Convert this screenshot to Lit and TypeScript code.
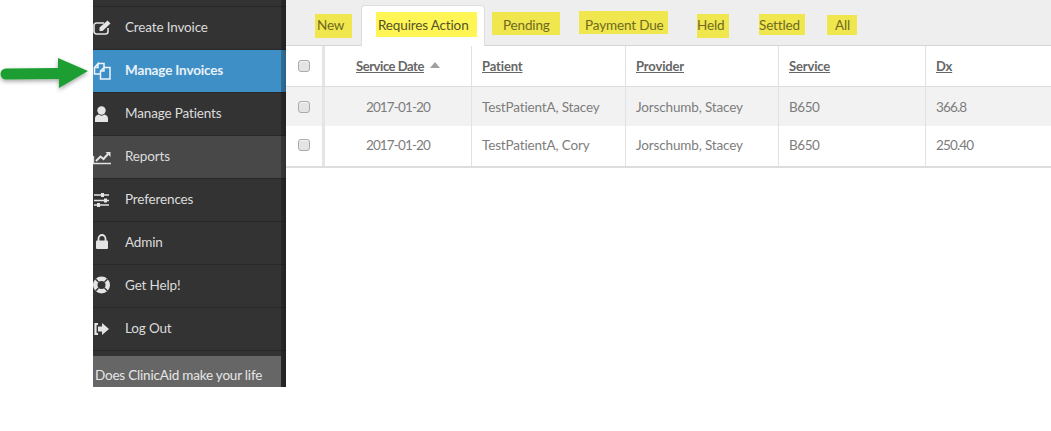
import { LitElement, html, css, svg } from "lit";
import { customElement } from "lit/decorators.js";

const ICONS: Record<string, unknown> = {
  edit: svg`<path d="M11 5H3.500A2.500 2.500 0 0 0 1 7.500V13.500A2.500 2.500 0 0 0 3.500 16H12.500A2.500 2.500 0 0 0 15 13.500V10" fill="none" stroke="currentColor" stroke-width="1.600"/><path d="M6.500 9.500L14.500 2.500L17.500 5.500L9.500 13H6.500Z" fill="currentColor"/>`,
  files: svg`<path d="M5 2.500H11V6M7 13H1.500V6.500L5 2.500V6.500H1.500" fill="none" stroke="currentColor" stroke-width="1.500"/><path d="M11 6.500H17V18H7.500V10L11 6.500V10H7.500" fill="none" stroke="currentColor" stroke-width="1.500"/>`,
  user: svg`<circle cx="8.500" cy="6.500" r="4.200" fill="currentColor"/><path d="M2 18V14.500C2 11.800 4 11 5.500 10.500C7 12 10 12 11.500 10.500C13 11 15 11.800 15 14.500V18Z" fill="currentColor"/>`,
  chart: svg`<path d="M0.500 9V16.500H18" fill="none" stroke="currentColor" stroke-width="1.300"/><path d="M3 14L7.500 9.500L10.500 12L15 7" fill="none" stroke="currentColor" stroke-width="2"/><path d="M12.500 5H17.500V10Z" fill="currentColor"/>`,
  sliders: svg`<path d="M1 5H16M1 10.500H16M1 15H16" stroke="currentColor" stroke-width="1.300"/><rect x="8" y="3" width="3" height="4" fill="currentColor"/><rect x="11" y="8.500" width="3" height="4" fill="currentColor"/><rect x="4" y="13" width="3" height="4" fill="currentColor"/>`,
  lock: svg`<path d="M5.500 8V5.500A3.500 3.500 0 0 1 12.500 5.500V8" fill="none" stroke="currentColor" stroke-width="1.800"/><rect x="3" y="7.500" width="12" height="8.500" rx="1" fill="currentColor"/>`,
  help: svg`<circle cx="8.500" cy="9" r="8.500" fill="currentColor"/><circle cx="8.500" cy="9" r="4" fill="#333"/><path d="M2.500 3L5.500 6M14.500 3L11.500 6M2.500 15L5.500 12M14.500 15L11.500 12" stroke="#333" stroke-width="1.300"/>`,
  logout: svg`<path d="M5 5H2.500V15H5" fill="none" stroke="currentColor" stroke-width="2.200"/><path d="M5 7.500H9V4L16 10L9 16V12.500H5Z" fill="currentColor"/>`,
};

const NAV = [
  { label: "Create Invoice", icon: "edit", cls: "" },
  { label: "Manage Invoices", icon: "files", cls: "active" },
  { label: "Manage Patients", icon: "user", cls: "" },
  { label: "Reports", icon: "chart", cls: "hover" },
  { label: "Preferences", icon: "sliders", cls: "" },
  { label: "Admin", icon: "lock", cls: "" },
  { label: "Get Help!", icon: "help", cls: "" },
  { label: "Log Out", icon: "logout", cls: "" },
];

const HEAD = ["Patient", "Provider", "Service", "Dx"];
const ROWS = [
  ["2017-01-20", "TestPatientA, Stacey", "Jorschumb, Stacey", "B650", "366.8"],
  ["2017-01-20", "TestPatientA, Cory", "Jorschumb, Stacey", "B650", "250.40"],
];

@customElement("app-root")
export class AppRoot extends LitElement {
  static styles = css`
    :host {
      display: block;
      width: 1051px;
      height: 431px;
      background: #fff;
      font-family: "Lato", "Liberation Sans", sans-serif;
      font-size: 13.5px;
      letter-spacing: -0.15px;
      overflow: hidden;
    }
    .page { display: flex; align-items: flex-start; }
    .gutter { width: 93px; height: 387px; flex: none; position: relative; }
    .arrow { position: absolute; left: 0; top: 52px; overflow: visible; }

    .sidebar {
      width: 193px;
      height: 387px;
      flex: none;
      background: #333;
      position: relative;
      overflow: hidden;
    }
    .sidebar::after {
      content: "";
      position: absolute;
      top: 0;
      bottom: 0;
      right: 0;
      width: 5px;
      background: linear-gradient(to right, rgba(0, 0, 0, 0.22), rgba(0, 0, 0, 0.32));
    }
    .stub { height: 6px; border-bottom: 1px solid #282828; }
    .nav { display: flex; flex-direction: column; }
    .item {
      height: 42px;
      border-bottom: 1px solid #282828;
      display: flex;
      align-items: center;
      color: #dcdcdc;
    }
    .item svg { width: 20px; height: 20px; flex: none; margin-right: 12px; color: #e4e4e4; }
    .label { padding-bottom: 2px; }
    .item.active { background: #3f8fc7; color: #e8f1f8; font-weight: 700; }
    .item.active svg { color: #edf4fa; }
    .item.hover { background: #484848; }
    .promo {
      margin-top: 5px;
      width: 188px;
      height: 32px;
      background: #666;
      color: #e6e6e6;
      padding: 8px 0 0 2px;
      box-sizing: border-box;
      line-height: 22px;
      white-space: nowrap;
      letter-spacing: -0.2px;
    }

    .main { flex: 1; min-width: 0; }
    .tabs {
      display: flex;
      align-items: flex-start;
      height: 45px;
      background: #eee;
      border-bottom: 1px solid #d5d5d5;
      color: #6f6a20;
    }
    .tab {
      box-sizing: border-box;
      background: #f0e64e;
      line-height: 22px;
      white-space: nowrap;
      flex: none;
    }
    .new { margin: 14px 0 0 29px; width: 37px; height: 24px; padding-left: 2px; }
    .tab-active {
      margin: 5px 0 0 9px;
      width: 124px;
      height: 41px;
      box-sizing: border-box;
      flex: none;
      background: #fff;
      border: 1px solid #ddd;
      border-bottom: 0;
      border-radius: 4px 4px 0 0;
      padding: 6px 0 0 14px;
    }
    .req {
      display: block;
      background: #fff655;
      width: 101px;
      height: 25px;
      padding: 2px 0 0 2px;
      color: #55522a;
    }
    .pending { margin: 12px 0 0 7px; width: 68px; height: 23px; padding: 2px 0 0 11px; }
    .due { margin: 11px 0 0 19px; width: 89px; height: 23px; padding: 3px 0 0 6px; }
    .held { margin: 14px 0 0 29px; width: 32px; height: 24px; }
    .settled { margin: 14px 0 0 30px; width: 46px; height: 21px; }
    .all { margin: 15px 0 0 22px; width: 30px; height: 20px; padding-left: 8px; line-height: 20px; }

    .row {
      display: grid;
      grid-template-columns: 36px 150px 154px 153px 147px 1fr;
      color: #7d7d7d;
      box-sizing: border-box;
    }
    .row > * { display: flex; align-items: center; box-sizing: border-box; }
    .head { height: 41px; border-bottom: 1px solid #ddd; color: #666; font-weight: 700; font-size: 13px; }
    .stripe { height: 39px; background: #f2f2f2; }
    .body { height: 40px; }
    .body > * { padding-bottom: 2px; }
    .table { border-bottom: 2px solid #ddd; }
    .check { justify-content: flex-start; padding-left: 12px; }
    .check input {
      appearance: none;
      margin: 0;
      width: 12px;
      height: 12px;
      background: #e4e4e4;
      border: 1px solid #aaa;
      border-radius: 3px;
      box-shadow: inset 0 1px 1px #f4f4f4;
    }
    .cell { padding-left: 10px; border-right: 1px solid #e2e2e2; white-space: nowrap; }
    .row > .cell:last-child { border-right: 0; }
    .date {
      border-left: 3px solid #e5e5e5;
      border-right: 1px solid #e2e2e2;
      justify-content: center;
      white-space: nowrap;
    }
    .num { letter-spacing: -0.85px; }
    .short { letter-spacing: -0.45px; }
    .link { text-decoration: underline; }
    .caret {
      width: 0;
      height: 0;
      margin: -2px 0 0 6px;
      border-left: 5px solid transparent;
      border-right: 5px solid transparent;
      border-bottom: 6px solid #a0a0a0;
    }
  `;

  render() {
    return html`
      <div class="page">
        <div class="gutter">
          <svg class="arrow" width="93" height="44" viewBox="0 0 93 44">
            <defs>
              <filter id="s" x="-10%" y="-30%" width="120%" height="170%">
                <feDropShadow dx="0" dy="2" stdDeviation="2" flood-color="#000" flood-opacity="0.35" />
              </filter>
            </defs>
            <path
              d="M6 16.500L58 16V6L88 19L59 36V27L6 27.500A5.500 5.500 0 0 1 6 16.500Z"
              fill="#1f9e33"
              filter="url(#s)"
            />
          </svg>
        </div>
        <nav class="sidebar">
          <div class="stub"></div>
          <div class="nav">
            ${NAV.map(
              (n) => html`
                <div class="item ${n.cls}">
                  <svg viewBox="0 0 20 20">${ICONS[n.icon]}</svg>
                  <span class="label">${n.label}</span>
                </div>
              `
            )}
          </div>
          <div class="promo">Does ClinicAid make your life</div>
        </nav>
        <main class="main">
          <div class="tabs">
            <span class="tab new">New</span>
            <div class="tab-active"><span class="tab req">Requires Action</span></div>
            <span class="tab pending">Pending</span>
            <span class="tab due">Payment Due</span>
            <span class="tab held">Held</span>
            <span class="tab settled">Settled</span>
            <span class="tab all">All</span>
          </div>
          <div class="table">
            <div class="row head">
              <div class="check"><input type="checkbox" /></div>
              <div class="date"><span class="link short">Service Date</span><span class="caret"></span></div>
              ${HEAD.map((h) => html`<div class="cell"><span class="link">${h}</span></div>`)}
            </div>
            ${ROWS.map(
              (r, i) => html`
                <div class="row ${i === 0 ? "stripe" : "body"}">
                  <div class="check"><input type="checkbox" /></div>
                  <div class="date num">${r[0]}</div>
                  <div class="cell">${r[1]}</div>
                  <div class="cell">${r[2]}</div>
                  <div class="cell short">${r[3]}</div>
                  <div class="cell num">${r[4]}</div>
                </div>
              `
            )}
          </div>
        </main>
      </div>
    `;
  }
}
